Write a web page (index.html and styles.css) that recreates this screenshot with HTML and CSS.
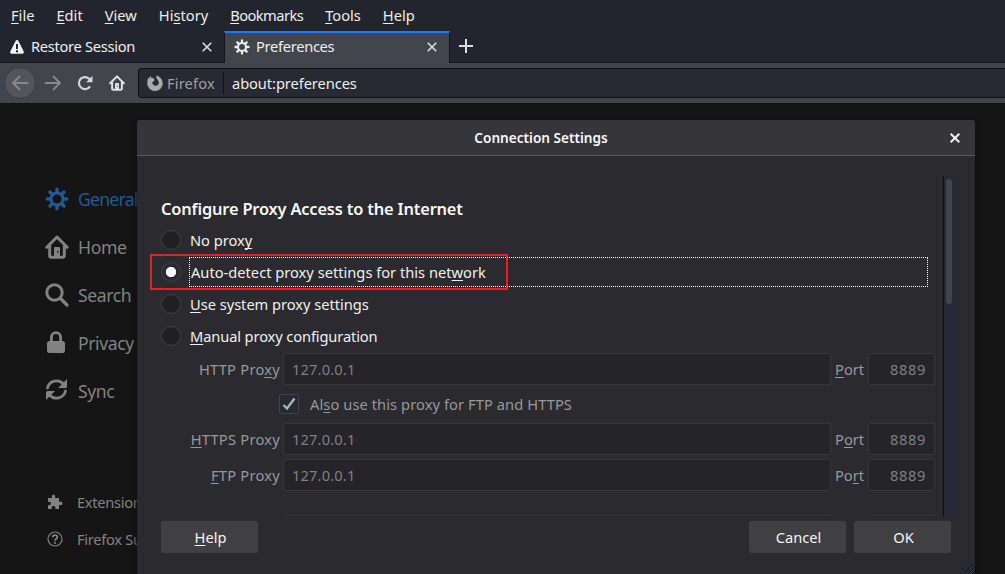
FILE: index.html
```
<!DOCTYPE html>
<html lang="en">
<head>
<meta charset="utf-8">
<title>Preferences</title>
<link rel="stylesheet" href="styles.css">
</head>
<body>
<svg class="defs" width="0" height="0">
  <symbol id="gear" viewBox="0 0 24 24"><g fill="none" stroke="currentColor"><circle cx="12" cy="12" r="6" stroke-width="3"/><path stroke-width="3.4" stroke-linecap="round" d="M12 5V2.2M12 19v2.8M5 12H2.2M19 12h2.8M7 7 5 5M17 17l2 2M7 17l-2 2M17 7l2-2"/></g></symbol>
  <symbol id="home" viewBox="0 0 24 24"><g fill="none" stroke="currentColor" stroke-width="3" stroke-linecap="round" stroke-linejoin="round"><path d="M1.8 12.3 12 2l10.200 10.300M4.700 11v9.500a1.700 1.700 0 0 0 1.700 1.700h11.200a1.700 1.700 0 0 0 1.700-1.700V11"/></g><path fill="currentColor" fill-rule="evenodd" d="M9 22v-9q0-1 1-1h4q1 0 1 1v9zM12 16h1.500v1.500H12z"/></symbol>
</svg>
<nav class="menubar">
  <span><u>F</u>ile</span><span><u>E</u>dit</span><span><u>V</u>iew</span><span>Hi<u>s</u>tory</span><span class="bookmarks"><u>B</u>ookmarks</span><span><u>T</u>ools</span><span><u>H</u>elp</span>
</nav>
<div class="tabs">
  <div class="tab">
    <svg class="tab-icon" viewBox="0 0 16 16"><path fill="#f2f2f2" fill-rule="evenodd" d="M6.600 1.900a1.600 1.600 0 0 1 2.800 0l5.200 10.300q.9 2.300-1.400 2.500H2.800Q.5 14.500 1.400 12.200zM7 5v5h2V5zM7 11.300v2h2v-2z"/></svg>
    <span class="tab-title">Restore Session</span>
    <svg class="close" viewBox="0 0 10 10"><path d="M.7.7l8.600 8.600M9.300.7.7 9.300"/></svg>
  </div>
  <div class="tab active">
    <svg class="tab-icon"><use href="#gear"/></svg>
    <span class="tab-title">Preferences</span>
    <svg class="close" viewBox="0 0 10 10"><path d="M.7.7l8.600 8.600M9.300.7.7 9.300"/></svg>
  </div>
  <div class="new-tab"><svg viewBox="0 0 14 14" width="14" height="14"><path d="M7 0v14M0 7h14" stroke="#ddd" stroke-width="2"/></svg></div>
</div>
<div class="toolbar">
  <div class="back"><svg width="16" height="16" viewBox="0 0 16 16"><path d="M15.500 8H1M7.500 1.500 1 8l6.500 6.500"/></svg></div>
  <svg class="forward" width="16" height="16" viewBox="0 0 16 16"><path d="M.5 8H15M8.500 1.500 15 8l-6.500 6.500"/></svg>
  <svg class="reload" width="16" height="16" viewBox="0 0 16 16"><path fill="none" stroke="#d6d6d6" stroke-width="2.200" d="M12.600 4.300A6 6 0 1 0 13 11.300"/><path fill="#d6d6d6" d="M15.500.8V7.200H9.200z"/></svg>
  <svg class="home-button"><use href="#home"/></svg>
  <div class="urlbar">
    <svg width="16" height="16" viewBox="0 0 16 16"><path fill="#aaa" d="M3.300.8 4.400 2.800 6.300 2.900 7.800 5.300 5.600 6.900 5.300 8.600A3.600 3.600 0 0 0 11.800 8.800Q12.200 6.500 10.600 5 8.900 3.500 9.300.6 11.500.9 13.300 2.800 15.800 5 15.800 8.200A7.800 7.800 0 0 1 .2 8.200Q.1 5 1.400 2.600L2.300 3.400z"/></svg>
    <span class="identity">Firefox</span>
    <span class="url">about:preferences</span>
  </div>
</div>
<main class="content">
  <aside class="sidebar">
    <div class="category selected"><svg><use href="#gear"/></svg>General</div>
    <div class="category"><svg><use href="#home"/></svg>Home</div>
    <div class="category"><svg viewBox="0 0 24 24"><g fill="none" stroke="currentColor" stroke-linecap="round"><circle cx="9.500" cy="9.500" r="7.700" stroke-width="3"/><path stroke-width="3.200" d="m15.500 15.500 6.500 6.500"/></g></svg>Search</div>
    <div class="category"><svg viewBox="0 0 24 24"><rect x="2" y="10" width="18" height="12" rx="2.500" fill="currentColor"/><path fill="none" stroke="currentColor" stroke-width="2.800" d="M6.400 12V6.200a4.600 4.600 0 0 1 9.200 0V12"/></svg>Privacy</div>
    <div class="category"><svg viewBox="0 0 24 24"><path fill="none" stroke="currentColor" stroke-width="2.800" stroke-linecap="round" d="M2.500 9A9.300 9.300 0 0 1 18.500 5M20.500 12A9.300 9.300 0 0 1 4.500 16"/><path fill="currentColor" d="M22 0v7.500a1.500 1.500 0 0 1-1.500 1.500H13zM1 21v-7.500A1.500 1.500 0 0 1 2.500 12H10z"/></svg>Sync</div>
    <div class="support first"><svg viewBox="0 0 16 16"><path fill="currentColor" d="M1 4h4.200Q4.500 3 4.800 2 5.300.7 6.500.7T8.200 2Q8.500 3 7.800 4H12v4q1-.8 2-.5 1.500.5 1.500 1.900T14 11.200q-1 .3-2-.4V15H8.200q.6-1 .1-2-.6-1-1.800-1t-1.800 1q-.4 1 .2 2H1v-4q1 .6 2 .1.900-.500.900-1.600T3 7.900Q2 7.500 1 8z"/></svg>Extensions &amp; Themes</div>
    <div class="support"><svg viewBox="0 0 16 16"><circle cx="8" cy="8" r="7" fill="none" stroke="currentColor" stroke-width="1.200"/><path fill="none" stroke="currentColor" stroke-width="1.800" d="M5.700 6.300Q5.700 4.200 8 4.200t2.300 2Q10.300 7.200 9 8 8 8.500 8 9.800"/><circle cx="8" cy="11.800" r="1.100" fill="currentColor"/></svg>Firefox Support</div>
  </aside>
  <section class="dialog">
    <header class="dialog-head"><span>Connection Settings</span><svg class="close" viewBox="0 0 10 10"><path d="M.7.7l8.600 8.600M9.300.7.7 9.300"/></svg></header>
    <div class="dialog-body">
      <div class="form">
        <h2>Configure Proxy Access to the Internet</h2>
        <div class="option"><i class="radio"></i><span class="label">No prox<u>y</u></span></div>
        <div class="option marked"><i class="radio on"></i><span class="label focus">Auto-detect proxy settings for this net<u>w</u>ork</span></div>
        <div class="option"><i class="radio"></i><span class="label"><u>U</u>se system proxy settings</span></div>
        <div class="option"><i class="radio"></i><span class="label tight"><u>M</u>anual proxy configuration</span></div>
        <div class="proxies">
          <span class="name">HTTP Pro<u>x</u>y</span><span class="field">127.0.0.1</span><span class="port"><u>P</u>ort</span><span class="field number">8889</span>
          <div class="also"><span class="check"><svg width="14" height="14" viewBox="0 0 14 14"><path fill="none" stroke="#b4b4b5" stroke-width="2.200" d="M1.500 8 5 11.500 12.500 1.500"/></svg></span><span>Al<u>s</u>o use this proxy for FTP and HTTPS</span></div>
          <span class="name"><u>H</u>TTPS Proxy</span><span class="field">127.0.0.1</span><span class="port">P<u>o</u>rt</span><span class="field number">8889</span>
          <span class="name"><u>F</u>TP Proxy</span><span class="field">127.0.0.1</span><span class="port">Po<u>r</u>t</span><span class="field number">8889</span>
          <span class="name"></span><span class="field socks"></span><span class="port"></span><span class="field number socks"></span>
        </div>
      </div>
      <div class="scrollbar"><div class="thumb"></div></div>
    </div>
    <footer class="buttons"><button class="help"><u>H</u>elp</button><button>Cancel</button><button>OK</button></footer>
    <svg class="resizer" width="15" height="12" viewBox="0 0 15 12"><path fill="#272935" d="M0 0h15v12H0z"/><path stroke="#15161b" stroke-width="1.200" d="M4 12 15 1M8 12l7-7M12 12l3-3"/><path stroke="#464855" stroke-width=".7" d="M5 12 15 2M9 12l6-6"/></svg>
  </section>
</main>
</body>
</html>
```
FILE: styles.css
```
*, *::after { box-sizing: border-box; }
body { margin: 0; width: 1005px; height: 574px; overflow: hidden; display: flex; flex-direction: column; background: #151516; color: #eeeeec; font: 14.67px/20px "Noto Sans", sans-serif; }
svg { flex: none; overflow: visible; }
.defs { position: absolute; }
u { text-decoration: underline; text-decoration-thickness: 1px; text-underline-offset: 2px; text-decoration-skip-ink: none; }

.menubar { height: 31px; flex: none; display: flex; gap: 22px; padding: 5px 11px 0; background: #23252e; }
.bookmarks { letter-spacing: -0.55px; }
.tabs { height: 32px; flex: none; display: flex; background: #23252e; border-bottom: 1px solid #15161b; }
.tab { width: 224px; height: 31px; display: flex; align-items: center; padding: 0 12px 0 9px; }
.tab.active { width: 226px; height: 32px; background: #42454c; border-top: 2px solid #2477f2; border-right: 1px solid #15161b; border-left: 1px solid #15161b; padding: 0 12px 3px 9px; }
.tab-icon { width: 16px; height: 16px; margin-right: 6px; }
.tab-title { flex: 1; letter-spacing: -0.3px; padding-bottom: 2px; }
.active .tab-title { padding-bottom: 1px; }
.close { width: 10px; height: 10px; fill: none; stroke: #dcdcdc; stroke-width: 1.6; }
.new-tab { display: flex; align-items: center; padding-left: 9px; }
.new-tab svg { margin-bottom: 2px; }

.toolbar { height: 41px; flex: none; display: flex; align-items: center; background: #42454c; border-bottom: 1px solid #101114; padding-left: 4px; }
.back { width: 32px; height: 32px; border-radius: 50%; border: 1px solid #3a3b42; background: #54545b; display: flex; align-items: center; justify-content: center; }
.back path, .forward path { fill: none; stroke: #88898d; stroke-width: 1.8; stroke-linecap: round; stroke-linejoin: round; }
.forward { margin-left: 9px; }
.reload { margin-left: 16px; }
.home-button { width: 16px; height: 16px; margin: 0 13px 0 16px; color: #e0e0e0; }
.urlbar { flex: 1; height: 30px; border: 1px solid #101114; border-right: 0; border-radius: 4px 0 0 4px; background: #272933; display: flex; align-items: center; padding-left: 8px; }
.identity { margin-left: 4px; width: 57px; height: 22px; line-height: 22px; color: #a0a09f; border-right: 1px solid #101114; letter-spacing: 0.15px; }
.url { padding-left: 8px; letter-spacing: -0.08px; }

.content { flex: 1; position: relative; overflow: hidden; }
.sidebar { width: 240px; padding: 71px 0 0 45px; white-space: nowrap; color: #828282; }
.category { height: 48px; display: flex; align-items: center; font-size: 17.6px; letter-spacing: -0.4px; gap: 9px; }
.category svg { width: 24px; height: 24px; }
.selected { color: #245992; letter-spacing: -0.75px; }
.support { height: 37px; display: flex; align-items: center; gap: 14px; padding-left: 2px; font-size: 14.67px; letter-spacing: -0.3px; }
.support svg { width: 16px; height: 16px; }
.first { margin-top: 68px; }

.dialog { position: absolute; left: 137px; top: 16px; width: 838px; height: 460px; background: #2b2a2f; border-radius: 3px; box-shadow: 0 2px 6px #0c0c0d; display: flex; flex-direction: column; }
.dialog-head { height: 36px; flex: none; display: flex; align-items: center; justify-content: center; padding-right: 30px; background: #363539; border-bottom: 1px solid #59595c; border-radius: 3px 3px 0 0; font-size: 13.6px; font-weight: 600; color: #f9f9fa; }
.dialog-head .close { position: absolute; right: 15px; stroke: #f0f0f0; stroke-width: 2; }
.dialog-body { height: 341px; margin-top: 20px; padding-left: 24px; display: flex; overflow: hidden; color: #f0f0f1; }
.form { width: 782px; flex: none; }
h2 { margin: 21px 0 3px; font-size: 16.4px; line-height: 24px; letter-spacing: -0.17px; font-weight: 600; color: #f9f9fa; }
.option { display: flex; align-items: center; height: 32px; gap: 8px; }
.marked { width: 358px; height: 36px; margin: -2px 0 -2px -11px; padding-left: 9px; border: 2px solid #ed1c24; position: relative; }
.radio { width: 20px; height: 20px; flex: none; border: 1px solid #414144; border-radius: 50%; background: #202022; }
.radio.on { background: radial-gradient(circle, #fff 4.8px, #272933 5.4px); }
.label { padding-left: 1px; white-space: nowrap; letter-spacing: -0.03px; }
.label.tight { letter-spacing: -0.12px; }
.label.focus { position: relative; padding-left: 2px; letter-spacing: 0; }
.focus::after { content: ""; position: absolute; left: 0; top: -5px; width: 739px; height: 30px; border: 1px dotted #fff; }
.proxies { display: grid; grid-template-columns: 119px 551px 34px 70px; row-gap: 4px; margin: 1px 0 0; color: #98989a; width: 774px; }
.proxies > span { height: 32px; line-height: 32px; }
.name { text-align: right; letter-spacing: 0.25px; }
.field { border: 1px solid #38383c; border-radius: 2px; background: #252428; margin-left: 3px; padding-left: 8px; color: #808081; letter-spacing: 0.15px; }
.proxies > .field { line-height: 31px; }
.port { padding-left: 4px; }
.proxies > .field.number { padding: 0 8px 0 0; text-align: right; letter-spacing: 0.6px; }
.also { grid-column: 1 / -1; height: 30px; display: flex; align-items: center; gap: 11px; padding-left: 118px; letter-spacing: 0.08px; }
.check { width: 20px; height: 20px; border: 1px solid #424247; border-radius: 2px; background: #272933; display: flex; align-items: center; justify-content: center; }
.field.socks { margin-top: 20px; }
.proxies > .field.socks { margin-top: 0; }
.scrollbar { width: 13px; background: #272935; border-left: 1px solid #111; padding: 3px 0 0 2px; }
.thumb { width: 6px; height: 125px; border-radius: 3px; background: #42454c; }
.proxies > .field.socks { margin-top: 20px; }
.buttons { display: flex; gap: 8px; padding: 4px 24px 0; }
button { width: 97px; height: 32px; border: 0; border-radius: 2px; background: #404042; color: #f4f4f5; font: inherit; padding: 0 0 0 2px; }
.help { margin-right: auto; }
.resizer { position: absolute; right: 0; top: 442px; }
```
